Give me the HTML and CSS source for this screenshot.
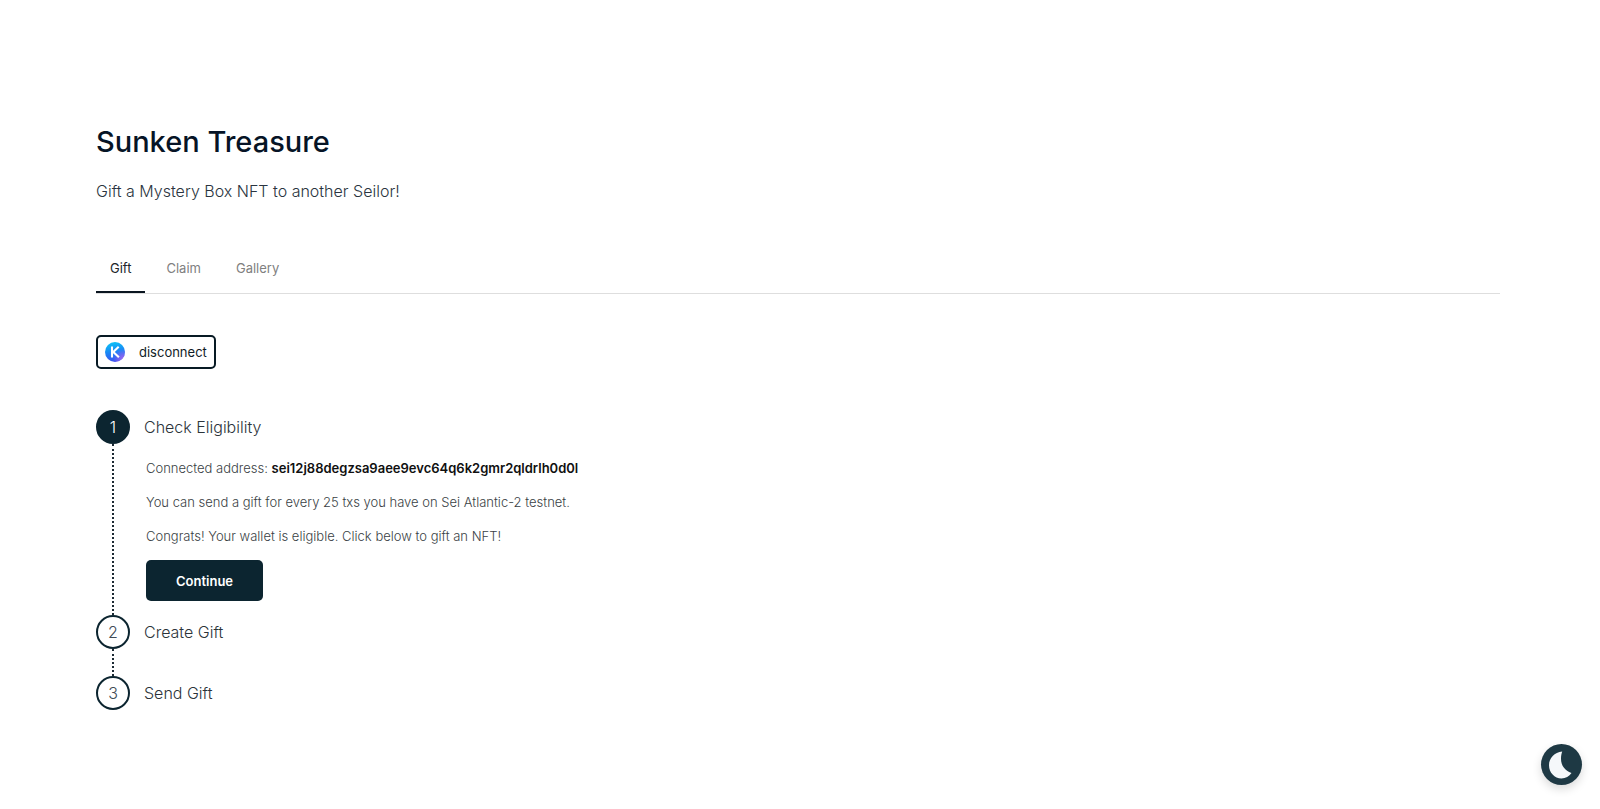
FILE: index.html
```
<!DOCTYPE html>
<html lang="en">
<head>
<meta charset="utf-8">
<meta name="viewport" content="width=device-width, initial-scale=1">
<title>Sunken Treasure</title>
<link rel="stylesheet" href="styles.css">
</head>
<body>
<main class="page">
  <h1 class="title">Sunken Treasure</h1>
  <p class="subtitle">Gift a Mystery Box NFT to another Seilor!</p>

  <div class="tabs" role="tablist">
    <button class="tab tab-active" type="button" role="tab" aria-selected="true">Gift</button>
    <button class="tab" type="button" role="tab" aria-selected="false">Claim</button>
    <button class="tab" type="button" role="tab" aria-selected="false">Gallery</button>
  </div>

  <button class="wallet" type="button">
    <svg class="wallet-icon" viewBox="0 0 20 20" aria-hidden="true">
      <defs>
        <linearGradient id="keplr" x1="0.4" y1="0" x2="0.6" y2="1">
          <stop offset="0" stop-color="#0cc3f5"/>
          <stop offset="0.5" stop-color="#1b83f5"/>
          <stop offset="1" stop-color="#3f4df0"/>
        </linearGradient>
        <radialGradient id="glow" cx="0.9" cy="0.85" r="0.5">
          <stop offset="0" stop-color="#a068f0"/>
          <stop offset="1" stop-color="#a068f0" stop-opacity="0"/>
        </radialGradient>
      </defs>
      <circle cx="10" cy="10" r="10" fill="url(#keplr)"/>
      <circle cx="10" cy="10" r="10" fill="url(#glow)"/>
      <path d="M7 4.600v10.800M13.700 4.800 8.300 9.900l5.600 5.300" fill="none" stroke="#fff" stroke-width="2.1"/>
    </svg>
    <span>disconnect</span>
  </button>

  <ol class="steps">
    <li class="step">
      <div class="rail"><span class="badge badge-active">1</span></div>
      <div class="step-content">
        <h2 class="step-title">Check Eligibility</h2>
        <div class="step-body">
          <p class="line">Connected address<span class="dark">:</span> <strong class="address">sei12j88degzsa9aee9evc64q6k2gmr2qldrlh0d0l</strong></p>
          <p class="line">You can send a gift for every 25 txs you have on Sei Atlantic-2 testnet.</p>
          <p class="line">Congrats! Your wallet is eligible. Click below to gift an NFT!</p>
          <button class="continue" type="button">Continue</button>
        </div>
      </div>
    </li>
    <li class="step">
      <div class="rail"><span class="badge">2</span></div>
      <div class="step-content"><h2 class="step-title">Create Gift</h2></div>
    </li>
    <li class="step">
      <div class="rail"><span class="badge">3</span></div>
      <div class="step-content"><h2 class="step-title">Send Gift</h2></div>
    </li>
  </ol>
</main>

<button class="theme" type="button" aria-label="Toggle dark mode">
  <svg class="moon" viewBox="0 0 41 41" aria-hidden="true">
    <path d="M21.200 7.500C13.500 8.300 8 14 8 21.200C8 28.600 13.600 34.400 20.500 34.400C24.700 34.400 28.200 32.400 30.500 29C24 27 20 21.500 20 14.800C20 12 20.400 9.700 21.200 7.500Z" fill="#f5f8fa"/>
  </svg>
</button>
</body>
</html>
```
FILE: styles.css
```
* {
  box-sizing: border-box;
}

body {
  margin: 0;
  background: #fff;
  color: #0c2530;
  font-family: Inter, "Liberation Sans", sans-serif;
  font-size: 13px;
}

button {
  font: inherit;
  cursor: pointer;
}

.page {
  padding: 120px 100px 64px 96px;
}

.title {
  margin: 0;
  color: #061426;
  font-size: 29px;
  font-weight: 500;
  line-height: 44px;
}

.subtitle {
  margin: 12px 0 0;
  color: #2a3440;
  font-size: 16px;
  font-weight: 300;
  line-height: 30px;
}

.tabs {
  display: flex;
  gap: 7px;
  margin-top: 38px;
  border-bottom: 1px solid #dedede;
}

.tab {
  padding: 14px 14px 13px;
  border: 0;
  border-bottom: 2px solid transparent;
  background: none;
  color: #808080;
  line-height: 20px;
}

.tab-active {
  border-bottom-color: #0a1520;
  color: #20262c;
}

.wallet {
  display: flex;
  align-items: center;
  gap: 14px;
  height: 34px;
  margin-top: 41px;
  padding: 0 7px;
  border: 2px solid #081a24;
  border-radius: 5px;
  background: #fff;
  color: #101c26;
}

.wallet-icon {
  width: 20px;
  height: 20px;
}

.steps {
  margin: 41px 0 0;
  padding: 0;
  list-style: none;
}

.step {
  display: flex;
  gap: 14px;
  min-height: 61px;
}

.rail {
  display: flex;
  flex-direction: column;
  align-items: center;
  width: 34px;
}

.step:not(:last-child) .rail::after {
  flex: 1;
  border-left: 2px dotted #1c2a34;
  content: "";
}

.badge {
  display: flex;
  align-items: center;
  justify-content: center;
  width: 34px;
  height: 34px;
  border: 2px solid #0c2530;
  border-radius: 50%;
  color: #404a54;
  font-size: 16px;
  font-weight: 300;
}

.badge-active {
  background: #0c2530;
  color: #fff;
}

.step-title {
  margin: 0;
  color: #2c333a;
  font-size: 16px;
  font-weight: 300;
  line-height: 34px;
}

.step-body {
  padding: 14px 0 14px 2px;
}

.line {
  margin: 0 0 14px;
  color: #3a3f45;
  font-weight: 300;
  line-height: 20px;
}

.dark {
  color: #101010;
}

.address {
  color: #101010;
  font-weight: 600;
}

.continue {
  display: block;
  height: 41px;
  padding: 0 30px;
  border: 0;
  border-radius: 5px;
  background: #0c2530;
  color: #fff;
  font-weight: 600;
}

.theme {
  position: fixed;
  right: 18px;
  bottom: 24px;
  width: 41px;
  height: 41px;
  padding: 0;
  border: 0;
  border-radius: 50%;
  background: #1e3944;
  box-shadow: 0 4px 10px rgba(0, 0, 0, 0.15);
}

.moon {
  display: block;
  width: 41px;
  height: 41px;
}
```
